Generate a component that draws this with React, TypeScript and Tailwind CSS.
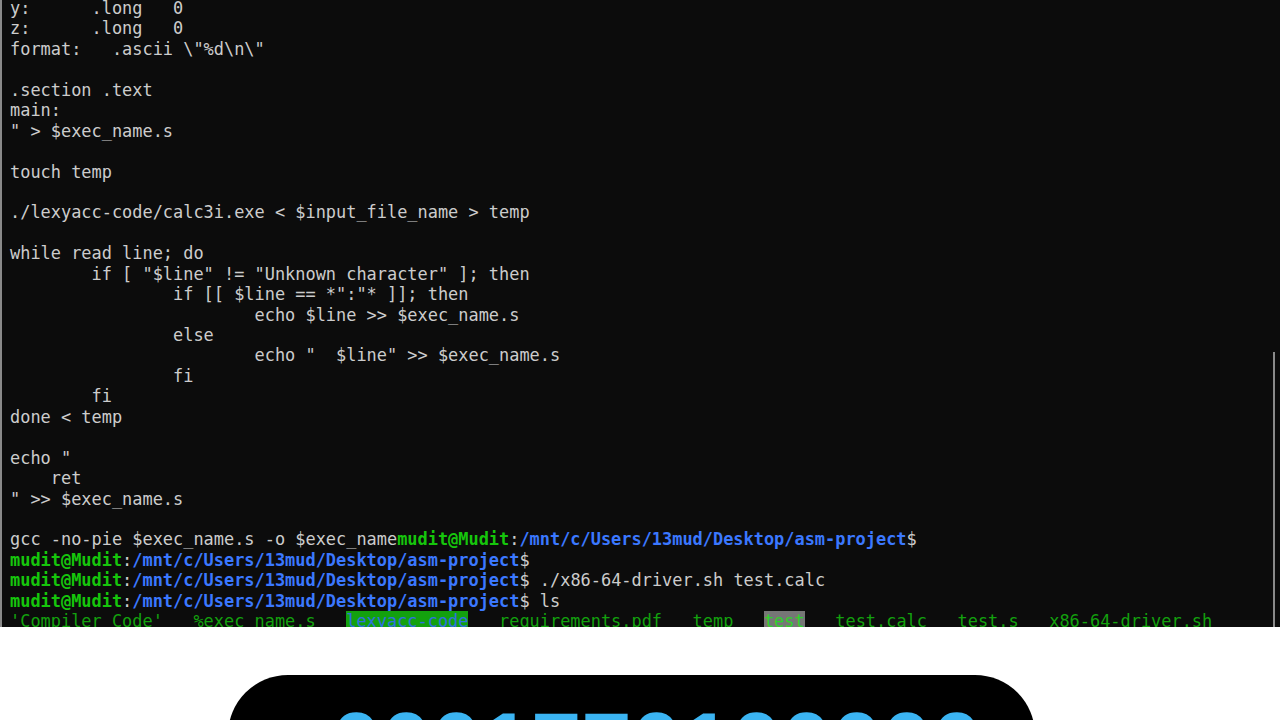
const lines: string[] = [
  "y:      .long   0",
  "z:      .long   0",
  'format:   .ascii \\"%d\\n\\"',
  "",
  ".section .text",
  "main:",
  '" > $exec_name.s',
  "",
  "touch temp",
  "",
  "./lexyacc-code/calc3i.exe < $input_file_name > temp",
  "",
  "while read line; do",
  '        if [ "$line" != "Unknown character" ]; then',
  '                if [[ $line == *":"* ]]; then',
  "                        echo $line >> $exec_name.s",
  "                else",
  '                        echo "  $line" >> $exec_name.s',
  "                fi",
  "        fi",
  "done < temp",
  "",
  'echo "',
  "    ret",
  '" >> $exec_name.s',
  "",
];

function Prompt() {
  return (
    <>
      <span className="text-[#16c60c] font-bold">mudit@Mudit</span>
      <span className="text-[#cccccc]">:</span>
      <span className="text-[#3b78ff] font-bold">/mnt/c/Users/13mud/Desktop/asm-project</span>
      <span className="text-[#cccccc]">$</span>
    </>
  );
}

export default function App() {
  return (
    <div className="w-[1280px] h-[720px] bg-white overflow-hidden">
      <div className="relative h-[627px] bg-[#0c0c0c] border-l-2 border-[#8a8a8a] overflow-hidden">
        <div className="absolute right-[5px] top-[352px] bottom-0 w-[2px] bg-[#8a8a8a]" />
        <pre className="-mt-[2px] pl-[8px] font-['DejaVu_Sans_Mono',monospace] text-[16.93px] leading-[20.45px] text-[#cccccc] whitespace-pre">
          {lines.map((l, i) => (
            <div key={i} className="h-[20.45px]">
              {l}
            </div>
          ))}
          <div className="h-[20.45px]">
            gcc -no-pie $exec_name.s -o $exec_name
            <Prompt />
          </div>
          <div className="h-[20.45px]">
            <Prompt />
          </div>
          <div className="h-[20.45px]">
            <Prompt /> ./x86-64-driver.sh test.calc
          </div>
          <div className="h-[20.45px]">
            <Prompt /> ls
          </div>
          <div className="h-[20.45px] text-[#13a10e]">
            {"'Compiler Code'   %exec_name.s   "}
            <span className="bg-[#13a10e] text-[#2f6fe0]">lexyacc-code</span>
            {"   requirements.pdf   temp   "}
            <span className="bg-[#767676] text-[#2fd22a]">test</span>
            {"   test.calc   test.s   x86-64-driver.sh"}
          </div>
        </pre>
      </div>
      <div className="pt-[48px] pl-[228px]">
        <div className="w-[807px] h-[120px] bg-black rounded-[60px] flex justify-center pt-[25px] pl-[50px]">
          <span className="font-['Liberation_Sans',Arial,sans-serif] font-bold text-[90px] leading-none text-[#3bb4f2]">
            0001770100000
          </span>
        </div>
      </div>
    </div>
  );
}
